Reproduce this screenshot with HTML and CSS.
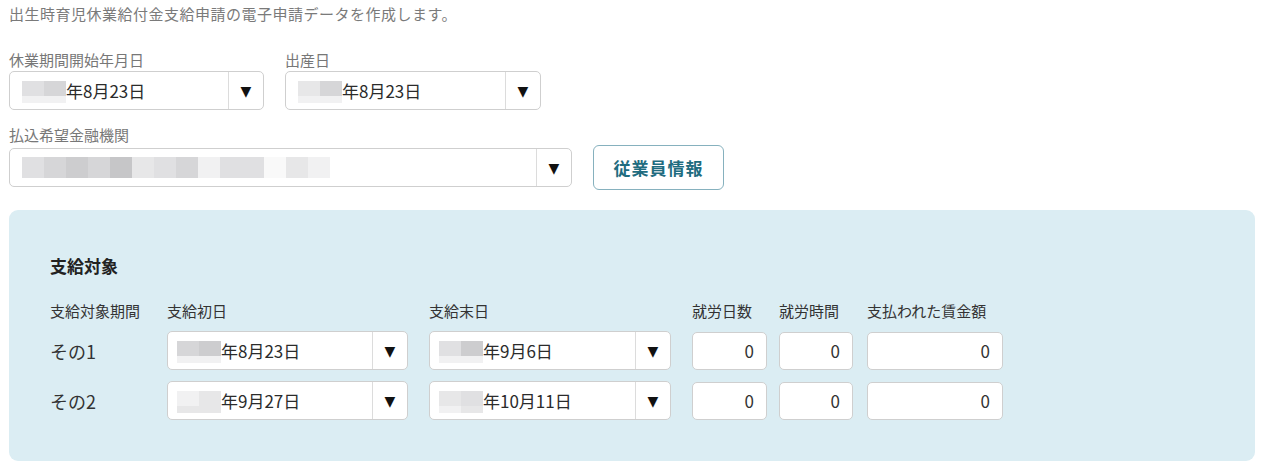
FILE: index.html
```html
<!DOCTYPE html>
<html lang="ja">
<head>
<meta charset="utf-8">
<title>出生時育児休業給付金支給申請</title>
<link rel="stylesheet" href="styles.css">
</head>
<body>
<div class="page">
  <p class="desc">出生時育児休業給付金支給申請の電子申請データを作成します。</p>

  <div class="fields-row">
    <div class="field w255">
      <label class="lbl">休業期間開始年月日</label>
      <div class="select">
        <div class="value">
          <span class="mosaic"><i class="c3"></i><i class="c1"></i><i class="c4"></i><i class="c1"></i></span>
          <span>年8月23日</span>
        </div>
        <div class="arrow">▼</div>
      </div>
    </div>
    <div class="field w256">
      <label class="lbl">出産日</label>
      <div class="select">
        <div class="value">
          <span class="mosaic"><i class="c2"></i><i class="c1"></i><i class="c4"></i><i class="c1"></i></span>
          <span>年8月23日</span>
        </div>
        <div class="arrow">▼</div>
      </div>
    </div>
  </div>

  <div class="field bank-field">
    <label class="lbl">払込希望金融機関</label>
    <div class="bank-row">
      <div class="select w562">
        <div class="value">
          <span class="mosaic-line">
            <i class="c3"></i><i class="c4"></i><i class="c5"></i><i class="c4"></i><i class="c6"></i><i class="c2"></i><i class="c3"></i><i class="c4"></i><i class="c1"></i><i class="c3"></i><i class="c3"></i><i class="c0"></i><i class="c2"></i><i class="c1"></i>
          </span>
        </div>
        <div class="arrow">▼</div>
      </div>
      <button class="btn">従業員情報</button>
    </div>
  </div>

  <section class="panel">
    <h2 class="panel-title">支給対象</h2>
    <div class="grid">
      <div class="th">支給対象期間</div>
      <div class="th">支給初日</div>
      <div class="th">支給末日</div>
      <div class="th">就労日数</div>
      <div class="th">就労時間</div>
      <div class="th">支払われた賃金額</div>

      <div class="period">その1</div>
      <div class="cell"><div class="select tight w241">
        <div class="value"><span class="mosaic"><i class="c4"></i><i class="c1"></i><i class="c5"></i><i class="c1"></i></span><span>年8月23日</span></div>
        <div class="arrow">▼</div></div></div>
      <div class="cell"><div class="select tight w242">
        <div class="value"><span class="mosaic"><i class="c3"></i><i class="c1"></i><i class="c5"></i><i class="c1"></i></span><span>年9月6日</span></div>
        <div class="arrow">▼</div></div></div>
      <div class="cell"><div class="num w75">0</div></div>
      <div class="cell"><div class="num w74">0</div></div>
      <div class="cell"><div class="num w136">0</div></div>

      <div class="period">その2</div>
      <div class="cell"><div class="select tight w241">
        <div class="value"><span class="mosaic"><i class="c1"></i><i class="c2"></i><i class="c2"></i><i class="c2"></i></span><span>年9月27日</span></div>
        <div class="arrow">▼</div></div></div>
      <div class="cell"><div class="select tight w242">
        <div class="value"><span class="mosaic"><i class="c2"></i><i class="c1"></i><i class="c3"></i><i class="c2"></i></span><span>年10月11日</span></div>
        <div class="arrow">▼</div></div></div>
      <div class="cell"><div class="num w75">0</div></div>
      <div class="cell"><div class="num w74">0</div></div>
      <div class="cell"><div class="num w136">0</div></div>
    </div>
  </section>
</div>
</body>
</html>
```

FILE: styles.css
```css
* { box-sizing: border-box; }

html, body {
  margin: 0;
  padding: 0;
  background: #ffffff;
}

body {
  font-family: "Noto Sans CJK JP", "Noto Sans", "Liberation Sans", sans-serif;
  color: #333333;
}

.page {
  padding: 4px 0 0 9px;
}

.desc {
  margin: 0;
  font-size: 15px;
  line-height: 20px;
  letter-spacing: 0.5px;
  color: #7a7a7a;
}

.fields-row {
  display: flex;
  gap: 21px;
  margin-top: 26px;
}

.field {
  display: flex;
  flex-direction: column;
}

.lbl {
  display: block;
  font-size: 15px;
  line-height: 20px;
  color: #777777;
  margin-bottom: 1px;
}

.bank-field {
  margin-top: 15px;
}

.bank-field .lbl {
  margin-bottom: 0;
}

.bank-row {
  display: flex;
  align-items: center;
  gap: 21px;
}

.w255 { width: 255px; }
.w256 { width: 256px; }
.w562 { width: 563px; }
.w241 { width: 241px; }
.w242 { width: 242px; }
.w75 { width: 75px; }
.w74 { width: 74px; }
.w136 { width: 136px; }

.select {
  display: flex;
  height: 39px;
  background: #ffffff;
  border: 1px solid #cfcfcf;
  border-radius: 5px;
}

.value {
  flex: 1;
  display: flex;
  align-items: center;
  padding-left: 12px;
  font-size: 17px;
  color: #2b2b2b;
  white-space: nowrap;
  overflow: hidden;
}

.tight .value {
  padding-left: 9px;
}

.arrow {
  width: 35px;
  border-left: 1px solid #dcdcdc;
  display: flex;
  align-items: center;
  justify-content: center;
  font-size: 14px;
  color: #111111;
  font-family: "DejaVu Sans", sans-serif;
}

.mosaic {
  display: grid;
  grid-template-rows: 15px 7px;
  grid-auto-flow: column;
  grid-auto-columns: 22px;
  margin-top: 2px;
}

.mosaic i, .mosaic-line i {
  display: block;
}

.mosaic-line {
  display: flex;
  height: 21px;
}

.mosaic-line i {
  width: 22px;
  height: 21px;
}

.c0 { background: #f9f9f9; }
.c1 { background: #f1f1f2; }
.c2 { background: #e7e7e8; }
.c3 { background: #e0e0e2; }
.c4 { background: #d6d6d8; }
.c5 { background: #cdcdcf; }
.c6 { background: #c6c6c8; }

.btn {
  width: 131px;
  height: 45px;
  border: 1px solid #86b1be;
  border-radius: 6px;
  background: #ffffff;
  color: #1f6c7f;
  font-family: "Noto Sans CJK JP", sans-serif;
  font-weight: 700;
  font-size: 17px;
  letter-spacing: 1px;
  padding: 0;
}

.panel {
  margin-top: 20px;
  width: 1246px;
  background: #dbedf3;
  border-radius: 9px;
  padding: 44px 0 41px 41px;
}

.panel-title {
  margin: 0;
  font-size: 17px;
  line-height: 24px;
  font-weight: 700;
  color: #222222;
}

.grid {
  margin-top: 23px;
  display: grid;
  grid-template-columns: 117px 262px 263px 87px 88px 136px;
  grid-template-rows: 19px 39px 39px;
  row-gap: 11px;
  align-items: center;
}

.th {
  font-size: 15px;
  line-height: 19px;
  color: #333333;
  white-space: nowrap;
}

.period {
  font-size: 18px;
  color: #333333;
}

.cell {
  display: flex;
}

.num {
  height: 38px;
  background: #ffffff;
  border: 1px solid #cfcfcf;
  border-radius: 5px;
  display: flex;
  align-items: center;
  justify-content: flex-end;
  padding-right: 12px;
  font-size: 17px;
  color: #333333;
}
```
